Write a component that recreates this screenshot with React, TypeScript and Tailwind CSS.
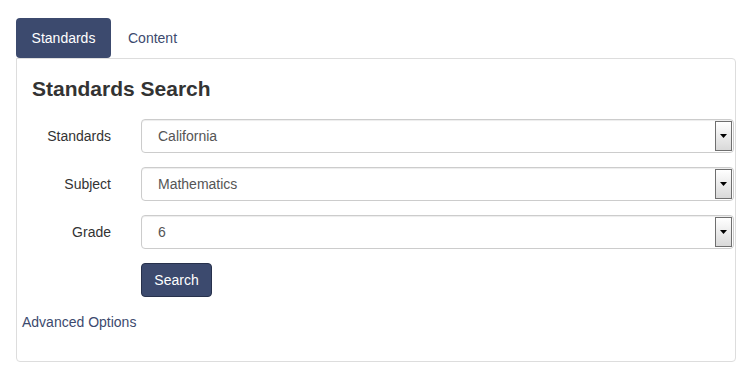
export default function App() {
    const rows = [
        { label: "Standards", value: "California" },
        { label: "Subject", value: "Mathematics" },
        { label: "Grade", value: "6" },
    ]

    return (
        <div
            className="min-h-screen bg-white pt-[18px] pl-4 pr-[17px] text-[14px] text-[#333]"
            style={{ fontFamily: '"Liberation Sans", Arial, sans-serif' }}
        >
            <div className="flex h-10 items-center">
                <div className="flex h-10 w-[95px] items-center justify-center rounded-[4px] bg-[#3c4a6e] text-white">
                    Standards
                </div>
                <div className="flex h-10 items-center pl-[17px] text-[#3c4a6e]">Content</div>
            </div>

            <div className="h-[304px] rounded-b-[4px] rounded-tr-[4px] border border-[#ddd] pt-[19px]">
                <h2 className="px-[15px] text-[21px] font-bold leading-[22px] text-[#333]">Standards Search</h2>

                <div className="mt-[19px] flex flex-col gap-[14px]">
                    {rows.map((r) => (
                        <div key={r.label} className="flex h-[34px] items-center">
                            <div className="w-[94px] text-right">{r.label}</div>
                            <div className="ml-[30px] mr-[1px] flex h-[34px] flex-1 items-center rounded-[4px] border border-[#ccc] shadow-[inset_0_1px_1px_rgba(0,0,0,0.075)]">
                                <span className="flex-1 pl-4 text-[#555]">{r.value}</span>
                                <div className="mr-[1px] flex h-[30px] w-[17px] items-center justify-center border border-[#6f6f6f] bg-gradient-to-b from-white to-[#d9d9d9]">
                                    <svg width="7" height="4" viewBox="0 0 7 4">
                                        <path d="M0 0H7L3.5 4Z" fill="#000" />
                                    </svg>
                                </div>
                            </div>
                        </div>
                    ))}

                    <div className="flex">
                        <button className="ml-[124px] h-[34px] w-[71px] rounded-[4px] border border-[#27314c] bg-[#3c4a6e] text-white">
                            Search
                        </button>
                    </div>
                </div>

                <div className="mt-[15px] px-[5px] leading-5 text-[#3c4a6e]">Advanced Options</div>
            </div>
        </div>
    )
}
